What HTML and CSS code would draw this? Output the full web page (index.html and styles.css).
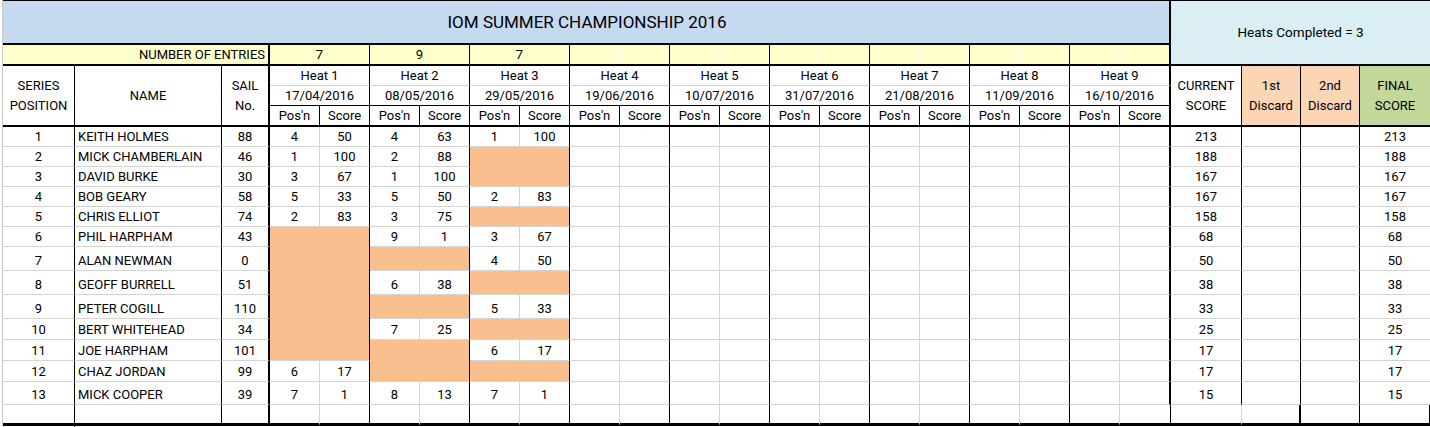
FILE: index.html
```html
<!DOCTYPE html>
<html lang="en">
<head>
<meta charset="utf-8">
<title>IOM Summer Championship 2016</title>
<link rel="stylesheet" href="styles.css">
</head>
<body>
<div class="sheet">
  <div class="title">IOM SUMMER CHAMPIONSHIP 2016</div>
  <div class="completed">Heats Completed = 3</div>

  <div class="ent-label">NUMBER OF ENTRIES</div>
  <div class="ent">7</div><div class="ent">9</div><div class="ent">7</div>
  <div class="ent hid">0</div><div class="ent hid">0</div><div class="ent hid">0</div>
  <div class="ent hid">0</div><div class="ent hid">0</div><div class="ent hid last">0</div>

  <div class="hd sr span3">SERIES<br>POSITION</div>
  <div class="hd nm span3">NAME</div>
  <div class="hd sl span3">SAIL<br>No.</div>
  <div class="heat">Heat 1</div><div class="heat">Heat 2</div><div class="heat">Heat 3</div>
  <div class="heat">Heat 4</div><div class="heat">Heat 5</div><div class="heat">Heat 6</div>
  <div class="heat">Heat 7</div><div class="heat">Heat 8</div><div class="heat last">Heat 9</div>
  <div class="hd cu span3">CURRENT<br>SCORE</div>
  <div class="hd d span3 disc">1st<br>Discard</div>
  <div class="hd d span3 disc">2nd<br>Discard</div>
  <div class="hd f span3 final">FINAL<br>SCORE</div>

  <div class="date">17/04/2016</div><div class="date">08/05/2016</div><div class="date">29/05/2016</div>
  <div class="date">19/06/2016</div><div class="date">10/07/2016</div><div class="date">31/07/2016</div>
  <div class="date">21/08/2016</div><div class="date">11/09/2016</div><div class="date last">16/10/2016</div>

  <div class="sub p">Pos'n</div><div class="sub s">Score</div>
  <div class="sub p">Pos'n</div><div class="sub s">Score</div>
  <div class="sub p">Pos'n</div><div class="sub s">Score</div>
  <div class="sub p">Pos'n</div><div class="sub s">Score</div>
  <div class="sub p">Pos'n</div><div class="sub s">Score</div>
  <div class="sub p">Pos'n</div><div class="sub s">Score</div>
  <div class="sub p">Pos'n</div><div class="sub s">Score</div>
  <div class="sub p">Pos'n</div><div class="sub s">Score</div>
  <div class="sub p">Pos'n</div><div class="sub s9">Score</div>

  <!-- 1 -->
  <div class="sr">1</div><div class="nm">KEITH HOLMES</div><div class="sl">88</div>
  <div class="p">4</div><div class="s">50</div>
  <div class="p">4</div><div class="s">63</div>
  <div class="p">1</div><div class="s">100</div>
  <div class="p"></div><div class="s"></div><div class="p"></div><div class="s"></div><div class="p"></div><div class="s"></div>
  <div class="p"></div><div class="s"></div><div class="p"></div><div class="s"></div><div class="p"></div><div class="s9"></div>
  <div class="cu">213</div><div class="d"></div><div class="d"></div><div class="f">213</div>

  <!-- 2 -->
  <div class="sr">2</div><div class="nm">MICK CHAMBERLAIN</div><div class="sl">46</div>
  <div class="p">1</div><div class="s">100</div>
  <div class="p">2</div><div class="s">88</div>
  <div class="o r2"></div>
  <div class="p"></div><div class="s"></div><div class="p"></div><div class="s"></div><div class="p"></div><div class="s"></div>
  <div class="p"></div><div class="s"></div><div class="p"></div><div class="s"></div><div class="p"></div><div class="s9"></div>
  <div class="cu">188</div><div class="d"></div><div class="d"></div><div class="f">188</div>

  <!-- 3 -->
  <div class="sr">3</div><div class="nm">DAVID BURKE</div><div class="sl">30</div>
  <div class="p">3</div><div class="s">67</div>
  <div class="p">1</div><div class="s">100</div>
  <div class="p"></div><div class="s"></div><div class="p"></div><div class="s"></div><div class="p"></div><div class="s"></div>
  <div class="p"></div><div class="s"></div><div class="p"></div><div class="s"></div><div class="p"></div><div class="s9"></div>
  <div class="cu">167</div><div class="d"></div><div class="d"></div><div class="f">167</div>

  <!-- 4 -->
  <div class="sr">4</div><div class="nm">BOB GEARY</div><div class="sl">58</div>
  <div class="p">5</div><div class="s">33</div>
  <div class="p">5</div><div class="s">50</div>
  <div class="p">2</div><div class="s">83</div>
  <div class="p"></div><div class="s"></div><div class="p"></div><div class="s"></div><div class="p"></div><div class="s"></div>
  <div class="p"></div><div class="s"></div><div class="p"></div><div class="s"></div><div class="p"></div><div class="s9"></div>
  <div class="cu">167</div><div class="d"></div><div class="d"></div><div class="f">167</div>

  <!-- 5 -->
  <div class="sr">5</div><div class="nm">CHRIS ELLIOT</div><div class="sl">74</div>
  <div class="p">2</div><div class="s">83</div>
  <div class="p">3</div><div class="s">75</div>
  <div class="o"></div>
  <div class="p"></div><div class="s"></div><div class="p"></div><div class="s"></div><div class="p"></div><div class="s"></div>
  <div class="p"></div><div class="s"></div><div class="p"></div><div class="s"></div><div class="p"></div><div class="s9"></div>
  <div class="cu">158</div><div class="d"></div><div class="d"></div><div class="f">158</div>

  <!-- 6 -->
  <div class="sr">6</div><div class="nm">PHIL HARPHAM</div><div class="sl">43</div>
  <div class="o r6"></div>
  <div class="p">9</div><div class="s">1</div>
  <div class="p">3</div><div class="s">67</div>
  <div class="p"></div><div class="s"></div><div class="p"></div><div class="s"></div><div class="p"></div><div class="s"></div>
  <div class="p"></div><div class="s"></div><div class="p"></div><div class="s"></div><div class="p"></div><div class="s9"></div>
  <div class="cu">68</div><div class="d"></div><div class="d"></div><div class="f">68</div>

  <!-- 7 -->
  <div class="sr">7</div><div class="nm">ALAN NEWMAN</div><div class="sl">0</div>
  <div class="o"></div>
  <div class="p">4</div><div class="s">50</div>
  <div class="p"></div><div class="s"></div><div class="p"></div><div class="s"></div><div class="p"></div><div class="s"></div>
  <div class="p"></div><div class="s"></div><div class="p"></div><div class="s"></div><div class="p"></div><div class="s9"></div>
  <div class="cu">50</div><div class="d"></div><div class="d"></div><div class="f">50</div>

  <!-- 8 -->
  <div class="sr">8</div><div class="nm">GEOFF BURRELL</div><div class="sl">51</div>
  <div class="p">6</div><div class="s">38</div>
  <div class="o"></div>
  <div class="p"></div><div class="s"></div><div class="p"></div><div class="s"></div><div class="p"></div><div class="s"></div>
  <div class="p"></div><div class="s"></div><div class="p"></div><div class="s"></div><div class="p"></div><div class="s9"></div>
  <div class="cu">38</div><div class="d"></div><div class="d"></div><div class="f">38</div>

  <!-- 9 -->
  <div class="sr">9</div><div class="nm">PETER COGILL</div><div class="sl">110</div>
  <div class="o"></div>
  <div class="p">5</div><div class="s">33</div>
  <div class="p"></div><div class="s"></div><div class="p"></div><div class="s"></div><div class="p"></div><div class="s"></div>
  <div class="p"></div><div class="s"></div><div class="p"></div><div class="s"></div><div class="p"></div><div class="s9"></div>
  <div class="cu">33</div><div class="d"></div><div class="d"></div><div class="f">33</div>

  <!-- 10 -->
  <div class="sr">10</div><div class="nm">BERT WHITEHEAD</div><div class="sl">34</div>
  <div class="p">7</div><div class="s">25</div>
  <div class="o"></div>
  <div class="p"></div><div class="s"></div><div class="p"></div><div class="s"></div><div class="p"></div><div class="s"></div>
  <div class="p"></div><div class="s"></div><div class="p"></div><div class="s"></div><div class="p"></div><div class="s9"></div>
  <div class="cu">25</div><div class="d"></div><div class="d"></div><div class="f">25</div>

  <!-- 11 -->
  <div class="sr">11</div><div class="nm">JOE HARPHAM</div><div class="sl">101</div>
  <div class="o r2"></div>
  <div class="p">6</div><div class="s">17</div>
  <div class="p"></div><div class="s"></div><div class="p"></div><div class="s"></div><div class="p"></div><div class="s"></div>
  <div class="p"></div><div class="s"></div><div class="p"></div><div class="s"></div><div class="p"></div><div class="s9"></div>
  <div class="cu">17</div><div class="d"></div><div class="d"></div><div class="f">17</div>

  <!-- 12 -->
  <div class="sr">12</div><div class="nm">CHAZ JORDAN</div><div class="sl">99</div>
  <div class="p">6</div><div class="s">17</div>
  <div class="o"></div>
  <div class="p"></div><div class="s"></div><div class="p"></div><div class="s"></div><div class="p"></div><div class="s"></div>
  <div class="p"></div><div class="s"></div><div class="p"></div><div class="s"></div><div class="p"></div><div class="s9"></div>
  <div class="cu">17</div><div class="d"></div><div class="d"></div><div class="f">17</div>

  <!-- 13 -->
  <div class="sr">13</div><div class="nm">MICK COOPER</div><div class="sl">39</div>
  <div class="p">7</div><div class="s">1</div>
  <div class="p">8</div><div class="s">13</div>
  <div class="p">7</div><div class="s">1</div>
  <div class="p"></div><div class="s"></div><div class="p"></div><div class="s"></div><div class="p"></div><div class="s"></div>
  <div class="p"></div><div class="s"></div><div class="p"></div><div class="s"></div><div class="p"></div><div class="s9"></div>
  <div class="cu">15</div><div class="d"></div><div class="d"></div><div class="f">15</div>

  <!-- empty -->
  <div class="sr end"></div><div class="nm end"></div><div class="sl end"></div>
  <div class="p end"></div><div class="s end"></div><div class="p end"></div><div class="s end"></div><div class="p end"></div><div class="s end"></div>
  <div class="p end"></div><div class="s end"></div><div class="p end"></div><div class="s end"></div><div class="p end"></div><div class="s end"></div>
  <div class="p end"></div><div class="s end"></div><div class="p end"></div><div class="s end"></div><div class="p end"></div><div class="s end"></div>
  <div class="p end"></div><div class="s9 end"></div>
  <div class="cu end"></div><div class="d end"></div><div class="d end"></div><div class="f end"></div>
</div>
</body>
</html>
```

FILE: styles.css
```css
html, body {
  margin: 0;
  padding: 0;
  background: #ffffff;
}

body {
  font-family: Roboto, Lato, "Liberation Sans", sans-serif;
  font-size: 13px;
  color: #000000;
}

.sheet {
  margin-left: 2px;
  border-left: 1px solid #c8c8c8;
  width: 1427px;
  display: grid;
  grid-template-columns: 72px 147px 48px repeat(8, 50px 50px) 50px 51px 71px 59px 59px 70px;
  grid-template-rows: 45px 21px 20px 20px 21px 20px 20px 20px 20px 20px 20px 24px 24px 24px 21px 21px 21px 23px 21px;
}

.sheet > div {
  box-sizing: border-box;
  display: flex;
  align-items: flex-end;
  justify-content: center;
  padding-bottom: 1px;
  line-height: 17px;
  white-space: nowrap;
  border-right: 1px solid #d4d4d4;
  border-bottom: 1px solid #d4d4d4;
}

/* title band */
.sheet > .title {
  grid-column: span 21;
  background: #c5d9f1;
  border-top: 1px solid #000;
  border-bottom: 2px solid #000;
  border-right: 2px solid #000;
  align-items: center;
  padding-bottom: 0;
  padding-left: 2px;
  font-size: 17px;
}

.sheet > .completed {
  grid-column: span 4;
  grid-row: span 2;
  background: #daeef3;
  border-top: 1px solid #000;
  border-bottom: 2px solid #000;
  border-right: none;
  align-items: center;
  padding-bottom: 0;
  font-size: 13.5px;
}

/* entries row */
.sheet > .ent-label {
  grid-column: span 3;
  background: #ffffcc;
  justify-content: flex-end;
  padding-right: 3px;
  border-right: 2px solid #000;
  border-bottom: 2px solid #000;
}

.sheet > .ent {
  grid-column: span 2;
  background: #ffffcc;
  border-right: 1px solid #000;
  border-bottom: 2px solid #000;
}

.sheet > .ent.hid {
  color: #ffffff;
}

.sheet > .ent.last,
.sheet > .heat.last,
.sheet > .date.last {
  border-right: 2px solid #000;
}

/* header */
.sheet > .hd {
  grid-row: span 3;
  flex-direction: column;
  align-items: center;
  justify-content: center;
  line-height: 20px;
  padding-bottom: 0;
  padding-top: 1px;
  text-align: center;
  border-bottom: 2px solid #000;
}

.sheet > .hd.nm {
  padding-left: 0;
  align-items: center;
  justify-content: center;
}

.sheet > .heat {
  grid-column: span 2;
  align-items: center;
  padding-bottom: 0;
  border-right: 1px solid #000;
}

.sheet > .date {
  grid-column: span 2;
  align-items: center;
  padding-bottom: 0;
  border-right: 1px solid #000;
  border-bottom: 1px solid #000;
}

.sheet > .sub {
  align-items: center;
  padding-bottom: 0;
  border-right: 1px solid #000;
  border-bottom: 2px solid #000;
}

.sheet > .sub.s9 {
  border-right: 2px solid #000;
}

.sheet > .disc {
  background: #fcd5b4;
}

.sheet > .final {
  background: #c4d79b;
}

/* column borders */
.sheet > .sr,
.sheet > .nm,
.sheet > .s,
.sheet > .cu,
.sheet > .d {
  border-right-color: #000;
}

.sheet > .sl,
.sheet > .s9 {
  border-right: 2px solid #000;
}

.sheet > .f {
  border-right: none;
}

.sheet > .nm {
  justify-content: flex-start;
  padding-left: 3px;
}

/* blank (did not sail) cells */
.sheet > .o {
  grid-column: span 2;
  background: #fabf8f;
  border-right: 1px solid #000;
}

.sheet > .r2 {
  grid-row: span 2;
}

.sheet > .r6 {
  grid-row: span 6;
}

.sheet > .end {
  border-bottom: 3px solid #000;
}
```
